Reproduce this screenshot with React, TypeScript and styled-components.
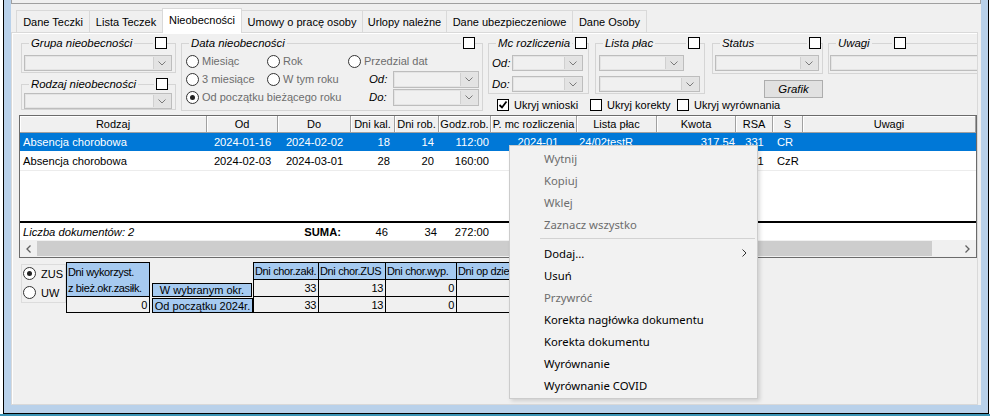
import React from "react";
import styled, { createGlobalStyle } from "styled-components";

const GlobalStyle = createGlobalStyle`
  html, body { margin: 0; padding: 0; background: #ffffff; }
  body { font-family: "Liberation Sans", Arial, sans-serif; font-size: 11px; color: #000; }
  *, *::before, *::after { box-sizing: border-box; }
`;

type Align = "left" | "center" | "right";
const justify = (a?: Align) => (a === "right" ? "flex-end" : a === "center" ? "center" : "flex-start");

const Root = styled.div`
  position: relative;
  width: 990px;
  height: 416px;
  overflow: hidden;
  display: flex;
  flex-direction: column;
  background: #ffffff;
`;

const Frame = styled.div`
  margin-left: 3px;
  width: 986px;
  height: 414px;
  flex: none;
  border: 1px solid #000;
  border-top: none;
  background: #b9d1ea;
  padding: 0 7px 8px 7px;
  display: flex;
`;

const TaskStrip = styled.div`
  height: 2px;
  flex: none;
  background: #3b93b4;
`;

const Client = styled.div`
  flex: 1;
  min-width: 0;
  background: #f0f0f0;
  display: flex;
  flex-direction: column;
  padding-right: 3px;
`;

const TopStrip = styled.div`
  height: 4px;
  flex: none;
  margin-right: -3px;
  border: 1px solid #a0a0a0;
  border-top: none;
  background: #f0f0f0;
`;

const TabRow = styled.div`
  display: flex;
  align-items: flex-end;
  height: 24px;
  margin-top: 4px;
  padding-left: 5px;
  flex: none;
  position: relative;
  z-index: 1;
`;

const Tab = styled.div<{ $w: number; $active?: boolean }>`
  width: ${(p) => p.$w}px;
  height: ${(p) => (p.$active ? 25 : 22)}px;
  flex: none;
  margin-right: -1px;
  margin-bottom: ${(p) => (p.$active ? -1 : 0)}px;
  border: 1px solid #d9d9d9;
  border-bottom: none;
  background: ${(p) => (p.$active ? "#ffffff" : "#f0f0f0")};
  display: flex;
  align-items: center;
  justify-content: center;
  padding-bottom: ${(p) => (p.$active ? 2 : 0)}px;
  white-space: nowrap;
  position: relative;
  z-index: ${(p) => (p.$active ? 2 : 1)};
`;

const Page = styled.div`
  flex: 1;
  min-height: 0;
  border: 1px solid #d9d9d9;
  box-shadow: inset 1px 1px 0 #ffffff;
  padding: 4px 0 0 7px;
  overflow: hidden;
  display: flex;
  flex-direction: column;
`;

const FilterRow = styled.div`
  display: flex;
  align-items: flex-start;
  gap: 5px;
  height: 78px;
  margin-left: 2px;
  flex: none;
`;

const Column = styled.div<{ $ml?: number }>`
  display: flex;
  flex-direction: column;
  flex: none;
  margin-left: ${(p) => p.$ml ?? 0}px;
`;

const RightArea = styled.div`
  display: flex;
  flex-direction: column;
  flex: none;
`;

const TopGroups = styled.div`
  display: flex;
  align-items: flex-start;
  height: 61px;
`;

const Group = styled.div<{ $w: number; $h: number; $mt?: number; $ml?: number }>`
  width: ${(p) => p.$w}px;
  height: ${(p) => p.$h}px;
  flex: none;
  margin-top: ${(p) => p.$mt ?? 6}px;
  margin-left: ${(p) => p.$ml ?? 0}px;
  border: 1px solid #d5d5d5;
  border-top: none;
  display: flex;
  flex-direction: column;
`;

const GroupHead = styled.div`
  display: flex;
  align-items: center;
  height: 12px;
  margin: -6px -1px 0;
  flex: none;
`;

const HeadLine = styled.span<{ $w?: number }>`
  height: 1px;
  background: #d5d5d5;
  flex: ${(p) => (p.$w != null ? `0 0 ${p.$w}px` : "1 1 auto")};
`;

const GroupLabel = styled.span`
  font-style: italic;
  font-size: 11.4px;
  padding: 0 2px;
  white-space: nowrap;
  line-height: 12px;
`;

const Check = styled.span<{ $ml?: number }>`
  width: 12px;
  height: 12px;
  flex: none;
  margin-left: ${(p) => p.$ml ?? 0}px;
  border: 1px solid #000;
  background: #fff;
  display: inline-flex;
  align-items: center;
  justify-content: center;
`;

const Combo = styled.div<{ $w: number; $h?: number; $mt?: number; $ml?: number }>`
  width: ${(p) => p.$w}px;
  height: ${(p) => p.$h ?? 16}px;
  flex: none;
  margin-top: ${(p) => p.$mt ?? 0}px;
  margin-left: ${(p) => p.$ml ?? 0}px;
  border: 1px solid #bdbdbd;
  box-shadow: inset 0 0 0 1px #e4e4e4;
  background: #f0f0f0;
  display: flex;
  justify-content: flex-end;
`;

const ComboBtn = styled.span`
  width: 17px;
  flex: none;
  margin: 1px;
  background: #e3e3e3;
  border-left: 1px solid #d0d0d0;
  display: flex;
  align-items: center;
  justify-content: center;
`;

const FieldRow = styled.div<{ $mt?: number }>`
  display: flex;
  align-items: center;
  margin-top: ${(p) => p.$mt ?? 0}px;
  padding-left: 3px;
`;

const FieldLabel = styled.span<{ $w: number; $ml?: number }>`
  width: ${(p) => p.$w}px;
  margin-left: ${(p) => p.$ml ?? 0}px;
  flex: none;
  font-style: italic;
  font-size: 11.4px;
  white-space: nowrap;
`;

const RadioGrid = styled.div`
  display: grid;
  grid-template-columns: 81px 81px auto;
  grid-auto-rows: 18px;
  align-items: center;
  margin: 3px 0 0 4px;
`;

const RadioItem = styled.div<{ $gap?: number; $span?: number; $muted?: boolean }>`
  display: flex;
  align-items: center;
  gap: ${(p) => p.$gap ?? 3}px;
  grid-column: span ${(p) => p.$span ?? 1};
  color: ${(p) => (p.$muted ? "#6d6d6d" : "#000")};
  white-space: nowrap;
`;

const RadioCircle = styled.span<{ $on?: boolean }>`
  width: 13px;
  height: 13px;
  flex: none;
  border-radius: 50%;
  border: 1px solid #333;
  background: #fff;
  display: inline-flex;
  align-items: center;
  justify-content: center;
  &::after {
    content: "";
    width: 5px;
    height: 5px;
    border-radius: 50%;
    background: ${(p) => (p.$on ? "#222" : "transparent")};
  }
`;

const Button = styled.div<{ $w: number; $ml: number }>`
  width: ${(p) => p.$w}px;
  height: 18px;
  margin: 6px 0 0 ${(p) => p.$ml}px;
  background: #e1e1e1;
  border: 1px solid #adadad;
  font-style: italic;
  font-size: 11.4px;
  display: flex;
  align-items: center;
  justify-content: center;
`;

const CheckRow = styled.div`
  display: flex;
  align-items: center;
  height: 13px;
  padding-left: 9px;
`;

const CheckItem = styled.div<{ $w?: number }>`
  display: flex;
  align-items: center;
  gap: 5px;
  width: ${(p) => (p.$w ? `${p.$w}px` : "auto")};
  flex: none;
  white-space: nowrap;
`;

/* ---------- data grid ---------- */

const COLS = "187px 71px 73px 44px 44px 52px 86px 80px 79px 37px 30px 173px";

const Grid = styled.div`
  width: 958px;
  height: 143px;
  flex: none;
  border: 1px solid #6b6b6b;
  background: #ffffff;
  display: flex;
  flex-direction: column;
`;

const GridHeader = styled.div`
  display: grid;
  grid-template-columns: ${COLS};
  height: 17px;
  flex: none;
  background: #f0f0f0;
  border-bottom: 1px solid #a0a0a0;
`;

const HeadCell = styled.div`
  display: flex;
  align-items: center;
  justify-content: center;
  border-right: 1px solid #a0a0a0;
  box-shadow: inset 1px 1px 0 #ffffff;
  white-space: nowrap;
  overflow: hidden;
`;

const GridBody = styled.div`
  height: 88px;
  flex: none;
  background: #fff;
  font-size: 11.2px;
`;

const GridRow = styled.div<{ $sel?: boolean }>`
  display: grid;
  grid-template-columns: ${COLS};
  height: 19px;
  border-bottom: 1px solid ${(p) => (p.$sel ? "#ffffff" : "#ececec")};
  background: ${(p) => (p.$sel ? "#0078d7" : "#ffffff")};
  color: ${(p) => (p.$sel ? "#ffffff" : "#000000")};
`;

const DataCell = styled.div<{ $align?: Align; $pad?: number; $bold?: boolean; $italic?: boolean }>`
  display: flex;
  align-items: center;
  justify-content: ${(p) => justify(p.$align)};
  padding-left: ${(p) => (p.$align !== "right" ? p.$pad ?? 0 : 0)}px;
  padding-right: ${(p) => (p.$align === "right" ? p.$pad ?? 0 : 0)}px;
  font-weight: ${(p) => (p.$bold ? 700 : 400)};
  font-style: ${(p) => (p.$italic ? "italic" : "normal")};
  white-space: nowrap;
  min-width: 0;
`;

const GridFooter = styled.div`
  display: grid;
  grid-template-columns: ${COLS};
  height: 19px;
  flex: none;
  border-top: 2px solid #000;
  background: #fff;
  font-size: 11.2px;
`;

const ScrollBar = styled.div`
  display: flex;
  height: 17px;
  flex: none;
  background: #f0f0f0;
`;

const ScrollBtn = styled.div`
  width: 17px;
  flex: none;
  display: flex;
  align-items: center;
  justify-content: center;
`;

const ScrollThumb = styled.div<{ $w: number }>`
  width: ${(p) => p.$w}px;
  flex: none;
  margin: 1px 0;
  background: #cdcdcd;
`;

const ScrollTrack = styled.div`
  flex: 1;
`;

/* ---------- bottom summary ---------- */

const BottomRow = styled.div`
  display: flex;
  align-items: flex-start;
  margin: 4px 0 0 2px;
  flex: none;
`;

const RadioBox = styled.div`
  width: 45px;
  height: 39px;
  flex: none;
  margin-top: 2px;
  border: 1px solid #dcdcdc;
  padding: 2px 0 0 1px;
  display: flex;
  flex-direction: column;
  gap: 6px;
`;

const SumTable = styled.div`
  display: grid;
  grid-template-columns: 84px 103px 66px 67px 71px 70px;
  grid-template-rows: 18px 17px 16px;
  flex: none;
  letter-spacing: -0.35px;
`;

const bw = (b?: string) =>
  (b ?? "0000")
    .split("")
    .map((c) => (c === "1" ? "1px" : "0"))
    .join(" ");

const SumCell = styled.div<{ $b?: string; $blue?: boolean; $align?: Align }>`
  border-style: solid;
  border-color: #000;
  border-width: ${(p) => bw(p.$b)};
  background: ${(p) => (p.$blue ? "#a6caf0" : "transparent")};
  display: flex;
  align-items: center;
  justify-content: ${(p) => justify(p.$align)};
  padding: 0 2px 0 1px;
  white-space: nowrap;
  overflow: hidden;
`;

const SumLabel = styled.div<{ $mt: number; $mr: number }>`
  margin: ${(p) => p.$mt}px ${(p) => p.$mr}px 0 2px;
  border: 1px solid #000;
  background: #a6caf0;
  display: flex;
  align-items: center;
  justify-content: center;
  white-space: nowrap;
  overflow: hidden;
  letter-spacing: 0;
`;

/* ---------- context menu ---------- */

const Menu = styled.div`
  position: absolute;
  left: 509px;
  top: 145px;
  width: 249px;
  z-index: 10;
  background: #f2f2f2;
  border: 1px solid #cccccc;
  box-shadow: 2px 2px 4px rgba(0, 0, 0, 0.14);
  padding: 1px 2px 2px;
  font-family: "Noto Sans", "Liberation Sans", sans-serif;
  font-size: 11.3px;
`;

const MenuItem = styled.div<{ $disabled?: boolean }>`
  height: 22px;
  display: flex;
  align-items: center;
  justify-content: space-between;
  padding: 0 8px 0 32px;
  color: ${(p) => (p.$disabled ? "#6d6d6d" : "#000000")};
  white-space: nowrap;
`;

const MenuSep = styled.div`
  height: 7px;
  display: flex;
  align-items: center;
  padding-left: 28px;
  &::after {
    content: "";
    flex: 1;
    height: 1px;
    background: #d2d2d2;
  }
`;

/* ---------- small drawings ---------- */

const Chevron = () => (
  <svg width="8" height="5" viewBox="0 0 8 5">
    <polyline points="0.5,0.5 4,4 7.5,0.5" fill="none" stroke="#7a7a7a" strokeWidth="1" />
  </svg>
);

const Tick = () => (
  <svg width="10" height="10" viewBox="0 0 10 10">
    <polyline points="1.5,5 4,7.5 8.5,1.5" fill="none" stroke="#000" strokeWidth="1.8" />
  </svg>
);

const Arrow = ({ dir }: { dir: "left" | "right" }) => (
  <svg width="5" height="8" viewBox="0 0 5 8">
    <polyline
      points={dir === "left" ? "4.5,0.5 1,4 4.5,7.5" : "0.5,0.5 4,4 0.5,7.5"}
      fill="none"
      stroke="#606060"
      strokeWidth="1.3"
    />
  </svg>
);

const SubArrow = () => (
  <svg width="5" height="8" viewBox="0 0 5 8">
    <polyline points="0.5,0.5 4,4 0.5,7.5" fill="none" stroke="#333" strokeWidth="1" />
  </svg>
);

const ComboBox = (props: { w: number; h?: number; mt?: number; ml?: number }) => (
  <Combo $w={props.w} $h={props.h} $mt={props.mt} $ml={props.ml}>
    <ComboBtn>
      <Chevron />
    </ComboBtn>
  </Combo>
);

const GroupBox = (props: {
  label: string;
  w: number;
  h: number;
  rw: number;
  mt?: number;
  ml?: number;
  children?: React.ReactNode;
}) => (
  <Group $w={props.w} $h={props.h} $mt={props.mt} $ml={props.ml}>
    <GroupHead>
      <HeadLine $w={8} />
      <GroupLabel>{props.label}</GroupLabel>
      <HeadLine />
      <Check $ml={2} />
      <HeadLine $w={props.rw} />
    </GroupHead>
    {props.children}
  </Group>
);

/* ---------- data ---------- */

const tabs = [
  { t: "Dane Teczki", w: 74 },
  { t: "Lista Teczek", w: 74 },
  { t: "Nieobecności", w: 80, active: true },
  { t: "Umowy o pracę osoby", w: 122 },
  { t: "Urlopy należne", w: 85 },
  { t: "Dane ubezpieczeniowe", w: 127 },
  { t: "Dane Osoby", w: 75 },
];

const columns: { title: string; align: Align; pad: number }[] = [
  { title: "Rodzaj", align: "left", pad: 3 },
  { title: "Od", align: "center", pad: 0 },
  { title: "Do", align: "center", pad: 0 },
  { title: "Dni kal.", align: "right", pad: 5 },
  { title: "Dni rob.", align: "right", pad: 5 },
  { title: "Godz.rob.", align: "right", pad: 2 },
  { title: "P. mc rozliczenia", align: "center", pad: 8 },
  { title: "Lista płac", align: "left", pad: 2 },
  { title: "Kwota", align: "right", pad: 1 },
  { title: "RSA", align: "center", pad: 0 },
  { title: "S", align: "left", pad: 4 },
  { title: "Uwagi", align: "left", pad: 2 },
];

const rows = [
  {
    sel: true,
    cells: ["Absencja chorobowa", "2024-01-16", "2024-02-02", "18", "14", "112:00", "2024-01", "24/02testR", "317.54", "331", "CR", ""],
  },
  {
    sel: false,
    cells: ["Absencja chorobowa", "2024-02-03", "2024-03-01", "28", "20", "160:00", "2024-02", "24/03testR", "520.10", "331", "CzR", ""],
  },
];

const footer: { text: string; align: Align; pad: number; bold?: boolean; italic?: boolean }[] = [
  { text: "Liczba dokumentów: 2", align: "left", pad: 3, italic: true },
  { text: "", align: "left", pad: 0 },
  { text: "SUMA:", align: "right", pad: 10, bold: true },
  { text: "46", align: "right", pad: 7 },
  { text: "34", align: "right", pad: 2 },
  { text: "272:00", align: "right", pad: 2 },
  { text: "", align: "left", pad: 0 },
  { text: "", align: "left", pad: 0 },
  { text: "", align: "left", pad: 0 },
  { text: "", align: "left", pad: 0 },
  { text: "", align: "left", pad: 0 },
  { text: "", align: "left", pad: 0 },
];

const sumHeads = ["Dni chor.zakł.", "Dni chor.ZUS", "Dni chor.wyp.", "Dni op dzie"];
const sumRowA = ["33", "13", "0", ""];
const sumRowB = ["33", "13", "0", ""];

const menuItems: ({ t: string; disabled?: boolean; sub?: boolean } | "sep")[] = [
  { t: "Wytnij", disabled: true },
  { t: "Kopiuj", disabled: true },
  { t: "Wklej", disabled: true },
  { t: "Zaznacz wszystko", disabled: true },
  "sep",
  { t: "Dodaj...", sub: true },
  { t: "Usuń" },
  { t: "Przywróć", disabled: true },
  { t: "Korekta nagłówka dokumentu" },
  { t: "Korekta dokumentu" },
  { t: "Wyrównanie" },
  { t: "Wyrównanie COVID" },
];

export default function App() {
  return (
    <>
      <GlobalStyle />
      <Root>
        <Frame>
          <Client>
            <TopStrip />
            <TabRow>
              {tabs.map((t) => (
                <Tab key={t.t} $w={t.w} $active={t.active}>
                  {t.t}
                </Tab>
              ))}
            </TabRow>
            <Page>
              <FilterRow>
                <Column>
                  <GroupBox label="Grupa nieobecności" w={155} h={30} rw={9}>
                    <ComboBox w={148} mt={6} ml={2} />
                  </GroupBox>
                  <GroupBox label="Rodzaj nieobecności" w={155} h={26} rw={8} mt={11}>
                    <ComboBox w={148} mt={3} ml={2} />
                  </GroupBox>
                </Column>

                <GroupBox label="Data nieobecności" w={302} h={68} rw={8}>
                  <RadioGrid>
                    <RadioItem $muted>
                      <RadioCircle />
                      Miesiąc
                    </RadioItem>
                    <RadioItem $muted>
                      <RadioCircle />
                      Rok
                    </RadioItem>
                    <RadioItem $muted>
                      <RadioCircle />
                      Przedzial dat
                    </RadioItem>
                    <RadioItem $muted>
                      <RadioCircle />3 miesiące
                    </RadioItem>
                    <RadioItem $muted>
                      <RadioCircle />W tym roku
                    </RadioItem>
                    <FieldRow>
                      <FieldLabel $w={24} $ml={18}>
                        Od:
                      </FieldLabel>
                      <ComboBox w={86} h={17} />
                    </FieldRow>
                    <RadioItem $muted $span={2}>
                      <RadioCircle $on />
                      Od początku bieżącego roku
                    </RadioItem>
                    <FieldRow>
                      <FieldLabel $w={24} $ml={18}>
                        Do:
                      </FieldLabel>
                      <ComboBox w={86} h={17} />
                    </FieldRow>
                  </RadioGrid>
                </GroupBox>

                <RightArea>
                  <TopGroups>
                    <GroupBox label="Mc rozliczenia" w={101} h={51} rw={2}>
                      <FieldRow $mt={6}>
                        <FieldLabel $w={20}>Od:</FieldLabel>
                        <ComboBox w={71} />
                      </FieldRow>
                      <FieldRow $mt={5}>
                        <FieldLabel $w={20}>Do:</FieldLabel>
                        <ComboBox w={71} />
                      </FieldRow>
                    </GroupBox>
                    <GroupBox label="Lista płac" w={110} h={51} rw={5} ml={6}>
                      <FieldRow $mt={6}>
                        <ComboBox w={85} />
                      </FieldRow>
                      <FieldRow $mt={5}>
                        <ComboBox w={101} />
                      </FieldRow>
                    </GroupBox>
                    <Column $ml={7}>
                      <GroupBox label="Status" w={111} h={31} rw={2}>
                        <ComboBox w={104} mt={6} ml={2} />
                      </GroupBox>
                      <Button $w={59} $ml={52}>
                        Grafik
                      </Button>
                    </Column>
                    <GroupBox label="Uwagi" w={170} h={31} rw={92} ml={5}>
                      <Combo $w={200} $mt={6} $ml={1} />
                    </GroupBox>
                  </TopGroups>
                  <CheckRow>
                    <CheckItem $w={93}>
                      <Check>
                        <Tick />
                      </Check>
                      Ukryj wnioski
                    </CheckItem>
                    <CheckItem $w={87}>
                      <Check />
                      Ukryj korekty
                    </CheckItem>
                    <CheckItem>
                      <Check />
                      Ukryj wyrównania
                    </CheckItem>
                  </CheckRow>
                </RightArea>
              </FilterRow>

              <Grid>
                <GridHeader>
                  {columns.map((c) => (
                    <HeadCell key={c.title}>{c.title}</HeadCell>
                  ))}
                </GridHeader>
                <GridBody>
                  {rows.map((r, i) => (
                    <GridRow key={i} $sel={r.sel}>
                      {r.cells.map((v, j) => (
                        <DataCell key={j} $align={columns[j].align} $pad={columns[j].pad}>
                          {v}
                        </DataCell>
                      ))}
                    </GridRow>
                  ))}
                </GridBody>
                <GridFooter>
                  {footer.map((f, j) => (
                    <DataCell key={j} $align={f.align} $pad={f.pad} $bold={f.bold} $italic={f.italic}>
                      {f.text}
                    </DataCell>
                  ))}
                </GridFooter>
                <ScrollBar>
                  <ScrollBtn>
                    <Arrow dir="left" />
                  </ScrollBtn>
                  <ScrollThumb $w={895} />
                  <ScrollTrack />
                  <ScrollBtn>
                    <Arrow dir="right" />
                  </ScrollBtn>
                </ScrollBar>
              </Grid>

              <BottomRow>
                <RadioBox>
                  <RadioItem $gap={5}>
                    <RadioCircle $on />
                    ZUS
                  </RadioItem>
                  <RadioItem $gap={5}>
                    <RadioCircle />
                    UW
                  </RadioItem>
                </RadioBox>
                <SumTable>
                  <SumCell $b="1101" $blue>
                    Dni wykorzyst.
                  </SumCell>
                  <div />
                  {sumHeads.map((h, i) => (
                    <SumCell key={h} $b={i === 0 ? "1111" : "1110"} $blue>
                      {h}
                    </SumCell>
                  ))}
                  <SumCell $b="0111" $blue>
                    z bież.okr.zasiłk.
                  </SumCell>
                  <SumLabel $mt={3} $mr={1}>
                    W wybranym okr.
                  </SumLabel>
                  {sumRowA.map((v, i) => (
                    <SumCell key={i} $b={i === 0 ? "0111" : "0110"} $align="right">
                      {v}
                    </SumCell>
                  ))}
                  <SumCell $b="0111" $align="right">
                    0
                  </SumCell>
                  <SumLabel $mt={1} $mr={0}>
                    Od początku 2024r.
                  </SumLabel>
                  {sumRowB.map((v, i) => (
                    <SumCell key={i} $b={i === 0 ? "0111" : "0110"} $align="right">
                      {v}
                    </SumCell>
                  ))}
                </SumTable>
              </BottomRow>
            </Page>
          </Client>
        </Frame>
        <TaskStrip />

        <Menu>
          {menuItems.map((m, i) =>
            m === "sep" ? (
              <MenuSep key={i} />
            ) : (
              <MenuItem key={i} $disabled={m.disabled}>
                <span>{m.t}</span>
                {m.sub && <SubArrow />}
              </MenuItem>
            )
          )}
        </Menu>
      </Root>
    </>
  );
}
